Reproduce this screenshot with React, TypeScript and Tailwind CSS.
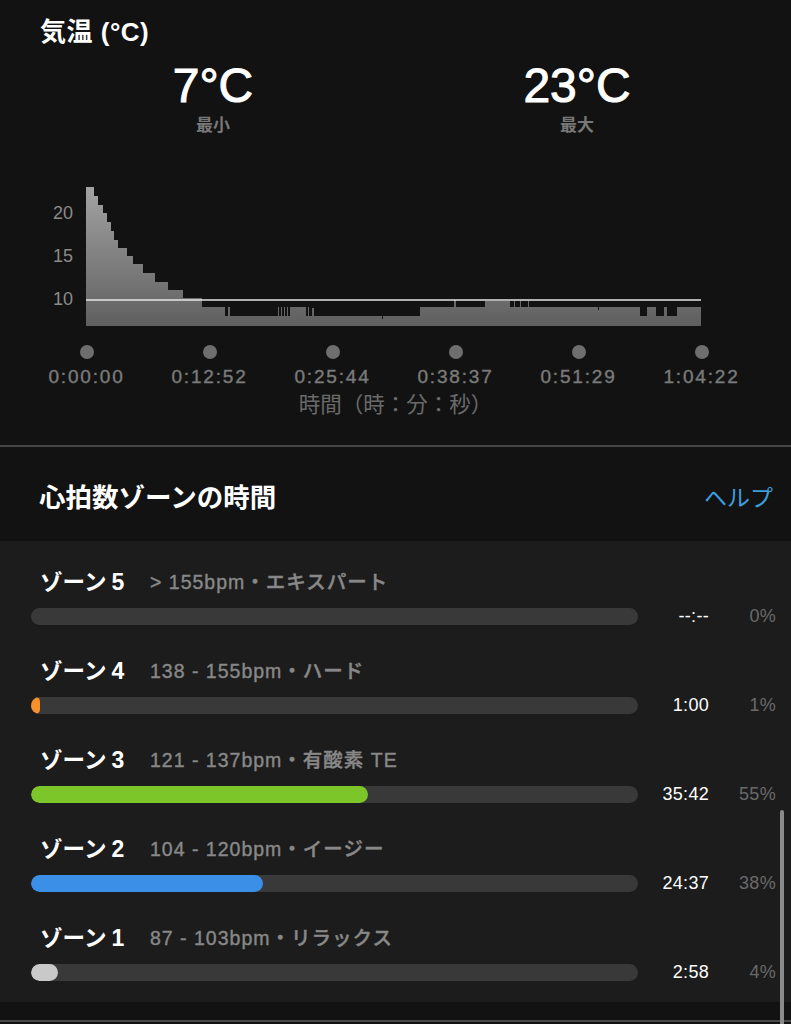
import React from 'react';

const font = { fontFamily: '"Liberation Sans", "Noto Sans CJK JP", sans-serif' };

// [x, top y] in page coordinates, chart spans x 86..701, y 187..326
const steps: [number, number][] = [
  [86, 187], [94, 196], [98, 205], [103, 213], [107, 222], [111, 231], [114, 240],
  [118, 248], [127, 256], [133, 264], [143, 273], [155, 282], [168, 290], [183, 298],
  [202, 307], [225, 316], [228, 307], [230, 316], [278, 307], [279, 316], [281, 307],
  [282, 316], [284, 307], [285, 316], [287, 307], [288, 316], [290, 307], [306, 316],
  [308, 307], [309, 316], [312, 308], [314, 316], [382, 319], [383, 316], [420, 307],
  [454, 300], [456, 307], [485, 301], [510, 307], [514, 301], [515, 307], [520, 301],
  [521, 307], [528, 301], [529, 307], [598, 310], [599, 307], [640, 316], [647, 307],
  [656, 316], [664, 307], [667, 316], [677, 307],
];

function chartPath() {
  let d = `M86,326 V${steps[0][1]}`;
  for (let i = 1; i < steps.length; i++) {
    d += ` H${steps[i][0]} V${steps[i][1]}`;
  }
  d += ' H701 V326 Z';
  return d;
}

const ticks = ['0:00:00', '0:12:52', '0:25:44', '0:38:37', '0:51:29', '1:04:22'];

const zones = [
  { n: '5', range: '> 155bpm・エキスパート', time: '--:--', pct: '0%', width: 0, color: '' },
  { n: '4', range: '138 - 155bpm・ハード', time: '1:00', pct: '1%', width: 9, color: 'bg-[#f5902b]' },
  { n: '3', range: '121 - 137bpm・有酸素 TE', time: '35:42', pct: '55%', width: 337, color: 'bg-[#7cc62a]' },
  { n: '2', range: '104 - 120bpm・イージー', time: '24:37', pct: '38%', width: 232, color: 'bg-[#3b8fe6]' },
  { n: '1', range: '87 - 103bpm・リラックス', time: '2:58', pct: '4%', width: 27, color: 'bg-[#c9c9c9]' },
];

function Stat({ value, label }: { value: string; label: string }) {
  return (
    <div className="w-[360px] flex flex-col items-center">
      <div className="text-[48px] leading-[48px] text-white [-webkit-text-stroke:1px_white]">{value}</div>
      <div className="mt-[6px] text-[17px] leading-[20px] font-bold text-[#777777]">{label}</div>
    </div>
  );
}

export default function App() {
  return (
    <div className="relative w-[791px] min-h-[1024px] bg-[#121212] overflow-hidden" style={font}>
      {/* 気温 */}
      <section className="h-[447px] border-b-2 border-[#444444] pt-[15px]">
        <h2 className="pl-[40px] text-[26px] leading-[34px] font-bold text-white tracking-[0.5px]">気温 (°C)</h2>

        <div className="mt-[13px] flex gap-[4px] pl-[33px]">
          <Stat value="7°C" label="最小" />
          <Stat value="23°C" label="最大" />
        </div>

        {/* グラフ */}
        <div className="relative mt-[51px] h-[139px]">
          {[
            { v: '20', top: 'top-[15px]' },
            { v: '15', top: 'top-[58px]' },
            { v: '10', top: 'top-[101px]' },
          ].map((l) => (
            <span
              key={l.v}
              className={`absolute left-[46px] ${l.top} w-[27px] text-right text-[18px] leading-[22px] text-[#8a8a8a]`}
            >
              {l.v}
            </span>
          ))}
          <svg className="ml-[86px] block" width="615" height="139" viewBox="86 187 615 139">
            <defs>
              <linearGradient id="fill" x1="0" y1="187" x2="0" y2="326" gradientUnits="userSpaceOnUse">
                <stop offset="0" stopColor="#a3a3a3" />
                <stop offset="1" stopColor="#5f5f5f" />
              </linearGradient>
            </defs>
            <path d={chartPath()} fill="url(#fill)" />
            <line x1="86" y1="300" x2="701" y2="300" stroke="#e6e6e6" strokeWidth="1.5" />
          </svg>
        </div>

        {/* 時間軸 */}
        <div className="ml-[25px] mt-[19px] grid grid-cols-6 w-[738px]">
          {ticks.map((t) => (
            <div key={t} className="flex flex-col items-center">
              <div className="w-[14px] h-[14px] rounded-full bg-[#6e6e6e]" />
              <div className="mt-[7px] text-[19px] leading-[22px] tracking-[1.8px] text-[#7a7a7a] [-webkit-text-stroke:0.4px_#7a7a7a]">
                {t}
              </div>
            </div>
          ))}
        </div>
        <div className="mt-[5px] text-center text-[21.5px] leading-[24px] text-[#6a6a6a]">
          時間（時：分：秒）
        </div>
      </section>

      {/* 心拍数ゾーン */}
      <div className="h-[94px] flex items-start justify-between pt-[36px] pl-[39px] pr-[18px]">
        <h2 className="text-[26.5px] leading-[30px] font-bold text-white">心拍数ゾーンの時間</h2>
        <span className="text-[23px] leading-[30px] text-[#3d9ddd]">ヘルプ</span>
      </div>

      <div className="bg-[#1c1c1c] pt-[27px] pb-[21px]">
        {zones.map((z) => (
          <div key={z.n} className="mb-[32px] last:mb-0">
            <div className="flex items-center pl-[40px] h-[28px]">
              <span className="w-[110px] text-[22.5px] leading-[28px] font-bold text-white">
                ゾーン<span className="ml-[5px] text-[23px]">{z.n}</span>
              </span>
              <span className="text-[19.5px] leading-[28px] font-medium text-[#888888] tracking-[1px] [-webkit-text-stroke:0.4px_#888888]">
                {z.range}
              </span>
            </div>
            <div className="mt-[12px] flex items-center pl-[31px] h-[17px]">
              <div className="w-[607px] h-[17px] rounded-full bg-[#393939] overflow-hidden">
                {z.width > 0 && (
                  <div className={`h-full rounded-full ${z.color}`} style={{ width: z.width }} />
                )}
              </div>
              <span className="w-[71px] text-right text-[18px] font-medium text-white tracking-[0.3px]">{z.time}</span>
              <span className="w-[67px] text-right text-[18px] text-[#6a6a6a] tracking-[0.3px]">{z.pct}</span>
            </div>
          </div>
        ))}
      </div>

      <div className="h-[18px]" />
      <div className="h-[2px] bg-[#4a4a4a]" />

      {/* scrollbar */}
      <div className="absolute left-[780px] top-[810px] w-[4px] h-[230px] rounded-full bg-[#8a8a8a]" />
    </div>
  );
}
